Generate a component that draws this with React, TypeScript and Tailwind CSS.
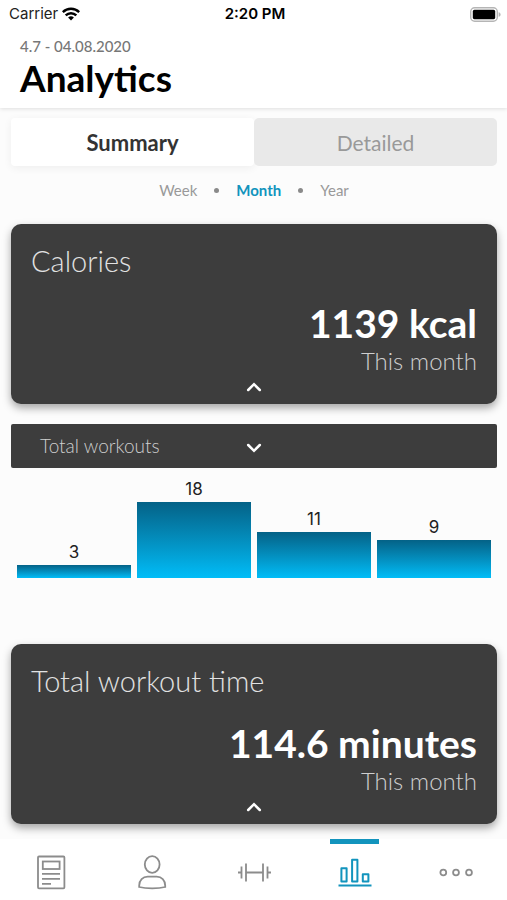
import { useState, type ReactNode } from "react";

const workouts = [3, 18, 11, 9];
const ranges = ["Week", "Month", "Year"];
const PIXELS_PER_WORKOUT = 4.2;

function StatusBar() {
  return (
    <div className="grid h-7 grid-cols-3 items-center pr-[6px] pl-[9px] font-['Inter','Liberation_Sans',sans-serif] text-[15px] leading-5 text-black">
      <div className="flex items-center gap-1">
        <span className="text-[#222]">Carrier</span>
        <svg width="18" height="14" viewBox="0 0 18 14" fill="none" stroke="#000" strokeWidth="2.5" aria-hidden="true">
          <path d="M.8 5.100a11.800 11.800 0 0 1 16.400 0" />
          <path d="M3.700 8.300a7.600 7.600 0 0 1 10.600 0" />
          <path d="M6.100 10.600a4.200 4.200 0 0 1 5.800 0L9 13.600z" fill="#000" stroke="none" />
        </svg>
      </div>
      <span className="text-center font-semibold">2:20 PM</span>
      <svg className="justify-self-end" width="31" height="15" viewBox="0 0 31 15" aria-hidden="true">
        <rect x="0.7" y="0.7" width="26.6" height="13.6" rx="4" fill="#fff" stroke="#b5b5b5" strokeWidth="1.4" />
        <rect x="2.8" y="2.8" width="22.4" height="9.4" rx="1.6" fill="#000" />
        <path d="M28.6 5.2c1.400.4 2 1.200 2 2.300s-.6 1.900-2 2.300z" fill="#b5b5b5" />
      </svg>
    </div>
  );
}

function Chevron({ down = false }: { down?: boolean }) {
  return (
    <svg width="16" height="10" viewBox="0 0 16 10" fill="none" stroke="#fff" strokeWidth="2.5" strokeLinecap="round" aria-hidden="true">
      <path d={down ? "M2.200 2 8 7.800 13.800 2" : "M2.200 8 8 2.200 13.800 8"} />
    </svg>
  );
}

function StatCard({ title, value }: { title: string; value: string }) {
  return (
    <section className="relative h-[180px] rounded-[10px] bg-[#3d3d3d] px-5 pt-[19px] shadow-[0_4px_8px_rgba(0,0,0,0.35)]">
      <h2 className="text-[29px] leading-9 font-light text-[#e2e2e2]">{title}</h2>
      <div className="mt-5 text-right">
        <p className="text-[39px] leading-[48px] font-bold text-white">{value}</p>
        <p className="text-[24px] leading-7 font-light text-[#cfcfcf]">This month</p>
      </div>
      <button type="button" aria-label={`Collapse ${title}`} className="absolute inset-x-0 bottom-3 flex justify-center">
        <Chevron />
      </button>
    </section>
  );
}

function NavItem({ label, active = false, children }: { label: string; active?: boolean; children: ReactNode }) {
  return (
    <a
      href="#"
      aria-label={label}
      aria-current={active ? "page" : undefined}
      className={`relative flex h-full flex-1 items-center justify-center pt-1 ${active ? "text-[#1294bd]" : "text-[#8c8c8c]"}`}
    >
      {active && <span className="absolute top-0 h-[5px] w-[49px] bg-[#1294bd]" />}
      <svg width="36" height="36" viewBox="0 0 36 36" fill="none" stroke="currentColor" strokeWidth="1.8" aria-hidden="true">
        {children}
      </svg>
    </a>
  );
}

export default function App() {
  const [range, setRange] = useState("Month");
  return (
    <div className="flex min-h-screen flex-col bg-[#fcfcfc] font-['Lato','Open_Sans',sans-serif]">
      <header className="bg-white pb-2 shadow-[0_1px_4px_rgba(0,0,0,0.12)]">
        <StatusBar />
        <div className="px-5 pt-[9px]">
          <p className="text-[15px] leading-[18px] font-medium text-[#777]">4.7 - 04.08.2020</p>
          <h1 className="text-[37px] leading-[45px] font-bold text-black">Analytics</h1>
        </div>
      </header>

      <main className="flex-1 overflow-hidden pt-[10px] pr-[10px] pb-[15px] pl-[11px]">
        <div role="tablist" className="grid h-12 grid-cols-2 leading-7">
          <button type="button" role="tab" aria-selected="true" className="rounded-[4px] bg-white pt-0.5 text-[22px] font-bold text-[#333] shadow-[0_2px_8px_rgba(0,0,0,0.06)]">
            Summary
          </button>
          <button type="button" role="tab" aria-selected="false" className="rounded-[5px] bg-[#e9e9e9] pt-0.5 text-[21px] text-[#999]">
            Detailed
          </button>
        </div>

        <div className="mt-[14px] flex items-center justify-center text-[15px] leading-5">
          {ranges.map((name, index) => (
            <div key={name} className="flex items-center">
              {index > 0 && <span className="mx-[17px] size-[5px] rounded-full bg-[#8a8a8a]" />}
              <button
                type="button"
                aria-pressed={name === range}
                onClick={() => setRange(name)}
                className={name === range ? "font-bold text-[#1294bd]" : "text-[#999]"}
              >
                {name}
              </button>
            </div>
          ))}
        </div>

        <div className="mt-6">
          <StatCard title="Calories" value="1139 kcal" />
        </div>

        <button type="button" className="mt-5 grid h-11 w-full grid-cols-[1fr_auto_1fr] items-center rounded-[2px] bg-[#3d3d3d] text-left">
          <span className="pl-[29px] text-[19px] leading-6 font-light text-[#cfcfcf]">Total workouts</span>
          <span className="pt-1">
            <Chevron down />
          </span>
        </button>

        <div className="grid h-[110px] grid-cols-4 items-end gap-[6px] px-[6px]">
          {workouts.map((count, index) => (
            <div key={index} className="text-center font-['Inter','Liberation_Sans',sans-serif] text-[17px] leading-5 text-[#222]">
              <span className="mb-[3px] block">{count}</span>
              <div
                className="bg-linear-to-b from-[#046287] to-[#00bdf8]"
                style={{ height: Math.round(count * PIXELS_PER_WORKOUT) }}
              />
            </div>
          ))}
        </div>

        <div className="mt-[66px]">
          <StatCard title="Total workout time" value="114.6 minutes" />
        </div>
      </main>

      <nav className="sticky bottom-0 flex h-[61px] bg-white">
        <NavItem label="Journal">
          <rect x="5" y="2.500" width="26.400" height="31.800" rx="1" />
          <rect x="9.800" y="7.500" width="16.800" height="7.500" />
          <path d="M9 19.800h18M9 24.800h18M9 29.800h9" />
        </NavItem>
        <NavItem label="Profile">
          <ellipse cx="18.200" cy="10.500" rx="7.400" ry="8.400" />
          <path d="M5.200 33v-1.500c0-5.300 3.600-8.900 8.500-8.900h9c4.900 0 8.500 3.600 8.500 8.900V33c-7 1.800-19 1.800-26 0z" />
        </NavItem>
        <NavItem label="Training">
          <path d="M2 18.500h3.500M10 18.500h17M31.500 18.500H35M5.500 12.500v12M10 9.500v18M27 9.500v18M31.500 12.500v12" />
        </NavItem>
        <NavItem label="Analytics" active>
          <path d="M1.500 31.500h33" strokeWidth="2" />
          <path d="M4.400 14.200h5.200v13.300H4.400zM15.100 5.800h5.300v21.700h-5.300zM25.800 20.200h5.600v7.300h-5.600z" strokeWidth="2" strokeLinejoin="round" />
        </NavItem>
        <NavItem label="More">
          <circle cx="5.300" cy="18.500" r="2.900" />
          <circle cx="18" cy="18.500" r="2.900" />
          <circle cx="31" cy="18.500" r="2.900" />
        </NavItem>
      </nav>
    </div>
  );
}
